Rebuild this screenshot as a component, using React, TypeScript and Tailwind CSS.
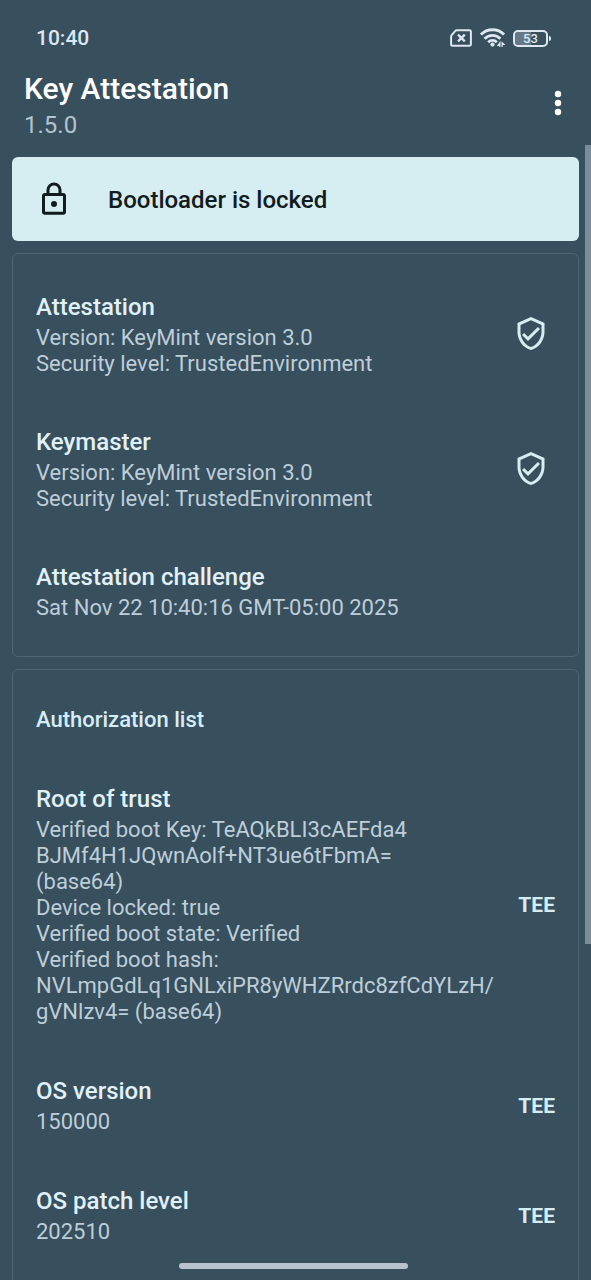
import React from "react";

type Entry = { title: string; lines: string[]; mark?: "shield" | "tee" };

const summary: Entry[] = [
  {
    title: "Attestation",
    lines: ["Version: KeyMint version 3.0", "Security level: TrustedEnvironment"],
    mark: "shield",
  },
  {
    title: "Keymaster",
    lines: ["Version: KeyMint version 3.0", "Security level: TrustedEnvironment"],
    mark: "shield",
  },
  {
    title: "Attestation challenge",
    lines: ["Sat Nov 22 10:40:16 GMT-05:00 2025"],
  },
];

const authorizations: Entry[] = [
  {
    title: "Root of trust",
    lines: [
      "Verified boot Key: TeAQkBLI3cAEFda4",
      "BJMf4H1JQwnAolf+NT3ue6tFbmA=",
      "(base64)",
      "Device locked: true",
      "Verified boot state: Verified",
      "Verified boot hash:",
      "NVLmpGdLq1GNLxiPR8yWHZRrdc8zfCdYLzH/",
      "gVNlzv4= (base64)",
    ],
    mark: "tee",
  },
  { title: "OS version", lines: ["150000"], mark: "tee" },
  { title: "OS patch level", lines: ["202510"], mark: "tee" },
];

function SimIcon() {
  return (
    <svg width="22" height="18" viewBox="0 0 22 18" fill="none" stroke="currentColor" aria-hidden="true">
      <path d="M6.800 1.200h12.600a1.500 1.500 0 0 1 1.500 1.500v12.600a1.500 1.500 0 0 1-1.500 1.500H2.600a1.500 1.500 0 0 1-1.500-1.500V7.600c0-.6.2-1.100.6-1.500l3.600-4.200c.4-.5.900-.7 1.500-.7z" strokeWidth="2" />
      <path d="M8 5.600l6.800 6.800M14.800 5.600l-6.800 6.800" strokeWidth="2.300" />
    </svg>
  );
}

function WifiIcon() {
  return (
    <svg width="25" height="20" viewBox="0 0 25 20" fill="none" stroke="currentColor" aria-hidden="true">
      <path d="M1 6.600C7.200.1 17.800.1 24 6.600" strokeWidth="2.800" />
      <path d="M4.600 10.700c4.300-4.500 11.500-4.500 15.800 0" strokeWidth="2.800" />
      <path d="M8.200 14.300c2.400-2.500 6.200-2.500 8.600 0" strokeWidth="2.800" />
      <circle cx="12.500" cy="16.600" r="2.100" fill="currentColor" stroke="none" />
      <path d="M19.900 19v-4.300l-1.900 2.600h1.900M22.100 19v-4.300l1.900 1.700h-1.900" strokeWidth="1.200" />
    </svg>
  );
}

function Battery() {
  return (
    <span className="flex items-center gap-px">
      <span className="relative flex h-[17px] w-[35px] items-center justify-center overflow-hidden rounded-[5px] border-2 border-current">
        <span className="absolute inset-y-0 left-0 w-1/2 bg-[#8496a4]/60" />
        <span className="relative text-[13px] leading-none font-medium">53</span>
      </span>
      <span className="h-[5px] w-[2px] rounded-r bg-current" />
    </span>
  );
}

function LockIcon() {
  return (
    <svg width="36" height="36" viewBox="0 0 24 24" fill="none" stroke="currentColor" strokeWidth="2" aria-hidden="true">
      <rect x="5" y="9" width="14" height="12.500" rx="1" />
      <path d="M8 9V6a4 4 0 0 1 8 0v3" />
      <circle cx="12" cy="15.300" r="2" fill="currentColor" stroke="none" />
    </svg>
  );
}

function ShieldIcon() {
  return (
    <svg width="36" height="36" viewBox="0 1 24 24" fill="currentColor" role="img" aria-label="Secure">
      <path d="M21 11c0 5.550-3.840 10.740-9 12-5.160-1.260-9-6.450-9-12V5l9-4 9 4v6m-9 10c3.750-1 7-5.460 7-9.780V6.300l-7-3.120L5 6.300v4.920C5 15.540 8.250 20 12 21m-2-4l-4-4 1.410-1.410L10 14.170l6.590-6.580L18 9" />
    </svg>
  );
}

function EntryRow({ entry }: { entry: Entry }) {
  return (
    <li className="flex items-center justify-between gap-4">
      <div className="min-w-0">
        <h2 className="mb-1 text-[24px] leading-7 font-medium text-[#e0f1f8]">{entry.title}</h2>
        {entry.lines.map((line) => (
          <p key={line} className="text-[22px] leading-[26px] whitespace-nowrap text-[#bdced9]">
            {line}
          </p>
        ))}
      </div>
      {entry.mark === "shield" && (
        <span className="mr-1.5 shrink-0 text-[#d6edf1]">
          <ShieldIcon />
        </span>
      )}
      {entry.mark === "tee" && (
        <span className="shrink-0 text-[21px] leading-7 font-bold text-[#d6edf6]">TEE</span>
      )}
    </li>
  );
}

export default function App() {
  return (
    <div className="relative flex h-screen flex-col overflow-hidden bg-[#384f5e] font-['Roboto','Noto_Sans',sans-serif]">
      <div className="flex items-center justify-between pt-6 pr-10 pl-9 text-[#dde8f2]">
        <span className="text-[21px] leading-7 font-medium">10:40</span>
        <div className="flex items-center gap-2">
          <SimIcon />
          <WifiIcon />
          <Battery />
        </div>
      </div>

      <header className="flex items-center justify-between pt-[17px] pr-[15px] pb-1 pl-6">
        <div>
          <h1 className="text-[30px] leading-10 font-medium text-white">Key Attestation</h1>
          <p className="text-[24px] leading-8 text-[#b3c4cf]">1.5.0</p>
        </div>
        <button type="button" aria-label="More options" className="text-white">
          <svg width="36" height="36" viewBox="0 2 36 36" fill="currentColor" aria-hidden="true">
            <circle cx="18" cy="9" r="3.200" />
            <circle cx="18" cy="18" r="3.200" />
            <circle cx="18" cy="27" r="3.200" />
          </svg>
        </button>
      </header>

      <main className="relative min-h-0 flex-1 overflow-hidden">
        <div className="flex flex-col gap-3 pt-3 pr-3 pl-3">
          <section className="flex h-21 items-center gap-9 rounded-md bg-[#d6edf1] px-6 text-[#111c20]">
            <LockIcon />
            <p className="pt-0.5 text-[24px] leading-7 font-medium">Bootloader is locked</p>
          </section>

          <section className="rounded-md border border-[#4d6574] px-[23px] pt-[39px] pb-[35px]">
            <ul className="flex flex-col gap-[51px]">
              {summary.map((entry) => (
                <EntryRow key={entry.title} entry={entry} />
              ))}
            </ul>
          </section>

          <section className="rounded-md border border-[#4d6574] px-[23px] pt-9 pb-14">
            <h2 className="text-[22px] leading-7 font-medium text-[#d6edf6]">Authorization list</h2>
            <ul className="flex flex-col gap-[52px] pt-[51px]">
              {authorizations.map((entry) => (
                <EntryRow key={entry.title} entry={entry} />
              ))}
            </ul>
          </section>
        </div>
        <div className="absolute top-0 right-0 h-[70.4%] w-[6px] bg-[#7b8d9b]" />
      </main>

      <div className="absolute inset-x-0 bottom-[11px] flex justify-center pr-1">
        <div className="h-[6px] w-[39%] rounded-full bg-[#b8c3cf]" />
      </div>
    </div>
  );
}
